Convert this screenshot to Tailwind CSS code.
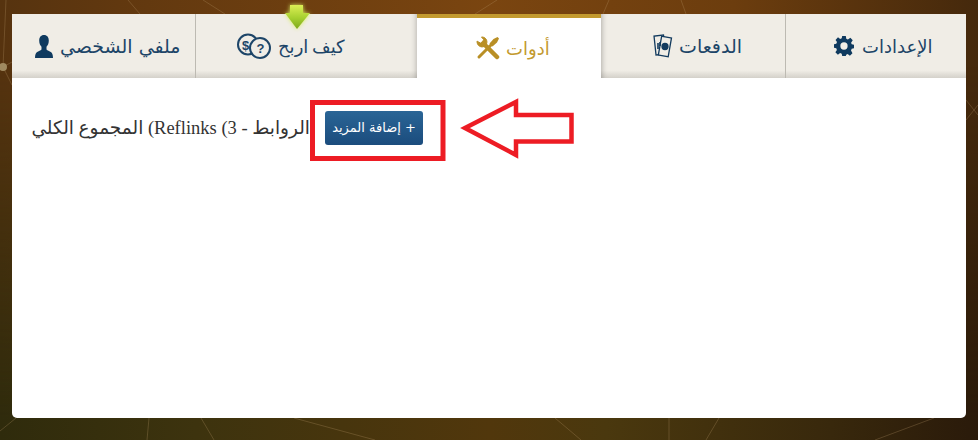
<!DOCTYPE html>
<html lang="ar">
<head>
<meta charset="utf-8">
<script src="https://cdn.jsdelivr.net/npm/@tailwindcss/browser@4"></script>
</head>
<body class="m-0 h-[440px] w-[978px] overflow-hidden font-['Liberation_Serif','DejaVu_Sans',serif]">
<div class="relative h-[440px] w-[978px] overflow-hidden bg-[#6a3e10] pt-[14px] pl-[12px]">
  <svg class="absolute inset-0" width="978" height="440" viewBox="0 0 978 440" fill="none">
    <defs>
      <linearGradient id="h" x1="0" x2="1" y1="0" y2="0">
        <stop offset="0" stop-color="#56330f"/>
        <stop offset=".12" stop-color="#61380f"/>
        <stop offset=".5" stop-color="#7a4510"/>
        <stop offset=".75" stop-color="#6c3d0e"/>
        <stop offset="1" stop-color="#45290c"/>
      </linearGradient>
      <linearGradient id="v" x1="0" x2="1" y1="0" y2="0">
        <stop offset="0" stop-color="#2f2b0c"/>
        <stop offset=".2" stop-color="#3d330e"/>
        <stop offset=".5" stop-color="#51370c"/>
        <stop offset=".62" stop-color="#4a380e"/>
        <stop offset=".85" stop-color="#38280c"/>
        <stop offset="1" stop-color="#2a1a0a"/>
      </linearGradient>
      <linearGradient id="fade" x1="0" x2="0" y1="0" y2="1">
        <stop offset=".15" stop-color="#fff" stop-opacity="0"/>
        <stop offset=".95" stop-color="#fff" stop-opacity="1"/>
      </linearGradient>
      <mask id="m"><rect width="978" height="440" fill="url(#fade)"/></mask>
      <linearGradient id="g" x1="0" x2="0" y1="0" y2="1">
        <stop offset="0" stop-color="#dcef55"/>
        <stop offset=".55" stop-color="#a5cf2f"/>
        <stop offset="1" stop-color="#7ea81c"/>
      </linearGradient>
    </defs>
    <rect width="978" height="440" fill="url(#h)"/>
    <rect width="978" height="440" fill="url(#v)" mask="url(#m)"/>
    <g stroke="#b99a6a" stroke-opacity=".28" stroke-width="1">
      <path d="M128 0L140 14M203 0L225 14M497 0L475 14M609 0L603 14M681 0L686 14M6 0L3 67L12 85M3 67L12 62M16 418L0 431M149 418L147 440M201 418L214 440M294 418L375 440M555 418L581 440M669 418V440M719 418L706 440M934 418L875 440M966 100L978 115M966 120L978 105"/>
    </g>
    <circle cx="3" cy="67" r="4" fill="#a08a60"/>
  </svg>

  <div class="relative h-[404px] w-[954px] rounded-b-[5px] bg-white">
    <div class="flex h-16 w-full text-[#1d4568]">
      <div class="flex w-[184px] items-center gap-[7px] border-r border-[#bdbab2] bg-[linear-gradient(180deg,#f0ede6_0%,#f0ede6_88%,#d4d1ca_100%)] pl-[23px]">
        <svg width="18" height="23" viewBox="0 0 18 23" fill="#0f3a5f"><path d="M9 0c3.200 0 4.800 2.400 4.800 5.600 0 2.800-.9 4.900-2.300 6.200v2.400c0 .9 2.500 1.700 4.300 2.700 1.300.7 2.200 2.600 2.200 6.100H0c0-3.500.9-5.400 2.200-6.100 1.800-1 4.300-1.800 4.300-2.700v-2.400C5.100 10.500 4.200 8.400 4.200 5.600 4.200 2.400 5.800 0 9 0z"/></svg>
        <span class="font-['DejaVu_Sans',sans-serif] text-[19px] font-normal">ملفي الشخصي</span>
      </div>
      <div class="flex w-[221px] items-center gap-[7px] bg-[linear-gradient(180deg,#f0ede6_0%,#f0ede6_88%,#d4d1ca_100%)] pl-[41px] shadow-[inset_-6px_0_6px_-6px_rgba(0,0,0,.3)]">
        <svg width="34" height="26" viewBox="0 0 34 26" fill="none" stroke="#1d4568" stroke-width="2"><circle cx="11" cy="11.500" r="10"/><circle cx="23" cy="15" r="10" fill="#f0ede6"/><text x="5" y="16.500" font-size="13" font-weight="700" font-family="Liberation Sans" fill="#1d4568" stroke="none">$</text><text x="19.500" y="20" font-size="13" font-weight="700" font-family="Liberation Sans" fill="#1d4568" stroke="none">?</text></svg>
        <span class="font-['DejaVu_Sans',sans-serif] text-[18px] [word-spacing:-2px]">كيف اربح</span>
      </div>
      <div class="flex w-[184px] items-center gap-[6px] border-t-4 border-[#c39a2f] bg-white pl-[59px] text-[#c39a2f]">
        <svg width="24" height="24" viewBox="0 0 24 24" fill="none" stroke="#b98f25" stroke-linecap="round"><path d="M8 8L21 21" stroke-width="4.500"/><path d="M1 5.500A5 5 0 0 0 8 10.500L10.500 8A5 5 0 0 0 5.500 1L7.800 3.800 5 7Z" fill="#b98f25" stroke="#b98f25" stroke-width="1"/><path d="M3 21L15 9" stroke-width="3"/><path d="M13.500 7.500L17.500 3 21.500 1 23 2.500 21 6.500 16.500 10.500Z" fill="#b98f25" stroke="none"/></svg>
        <span class="font-['DejaVu_Sans',sans-serif] text-[18px]">أدوات</span>
      </div>
      <div class="flex w-[185px] items-center gap-[6px] border-r border-[#bdbab2] bg-[linear-gradient(180deg,#f0ede6_0%,#f0ede6_88%,#d4d1ca_100%)] pl-[52px] shadow-[inset_6px_0_6px_-6px_rgba(0,0,0,.35)]">
        <svg width="20" height="24" viewBox="0 0 20 24" fill="none" stroke="#123a5e" stroke-width="1.300"><rect x="2" y="1.500" width="9.500" height="19" transform="rotate(-6 7 11)" fill="#f0ede6"/><rect x="7" y="3" width="10" height="19" transform="rotate(10 12 12)" fill="#f0ede6"/><circle cx="12" cy="12.500" r="3" fill="#123a5e"/><path d="M5 9v6M7 8v4" stroke-width="1.600"/></svg>
        <span class="font-['DejaVu_Sans',sans-serif] text-[19px]">الدفعات</span>
      </div>
      <div class="flex w-[180px] items-center gap-[8px] bg-[linear-gradient(180deg,#f0ede6_0%,#f0ede6_88%,#d4d1ca_100%)] pl-[48px]">
        <svg width="20" height="20" viewBox="0 0 22 22" fill="#0f3a5f" fill-rule="evenodd"><path d="M9 0h4l.5 3 1.800.8L18 2l2.600 2.800-1.800 2.500.7 1.800 2.500.5v4l-2.500.5-.8 1.800L20.300 19l-2.800 2.600-2.500-1.800-1.600.7L13 22H9l-.5-2.500-1.800-.7L4.300 20.500 1.500 17.800l1.700-2.500-.7-1.800L0 13V9l2.500-.5.800-1.800L1.700 4.300 4.400 1.500l2.400 1.700L8.500 2.500zM11 7a4 4 0 100 8 4 4 0 000-8z"/></svg>
        <span class="font-['DejaVu_Sans',sans-serif] text-[18px]">الإعدادات</span>
      </div>
    </div>
    <div class="flex items-center pl-[18px] pt-[33px]">
      <p dir="rtl" class="w-[280px] shrink-0 whitespace-nowrap font-['Liberation_Serif','DejaVu_Sans',serif] text-[18.5px] leading-[34px] text-[#333]">الروابط - 3) Reflinks) المجموع الكلي</p>
      <button class="ml-[15px] flex h-[34px] w-[98px] shrink-0 items-center justify-center rounded-[3px] bg-[linear-gradient(180deg,#2a6596,#1b4c7d)] font-['DejaVu_Sans',sans-serif] text-[13px] text-white" dir="rtl">+ إضافة المزيد</button>
    </div>
  </div>

  <svg class="absolute left-[280px] top-0" width="34" height="34" viewBox="0 0 34 34"><g class="drop-shadow-[0_0_2px_#d8ef60]"><path d="M10 5H23V13H30L17 29L5 13H10Z" fill="url(#g)"/></g></svg>

  <svg class="absolute left-0 top-0" width="978" height="440" fill="none" stroke="#ed1c24" stroke-linejoin="miter">
    <rect x="312.500" y="102.500" width="130.500" height="56" stroke-width="5"/>
    <path d="M465 128L516 102V115H571.500V141.500H516V155Z" stroke-width="4.500"/>
  </svg>
</div>
</body>
</html>
